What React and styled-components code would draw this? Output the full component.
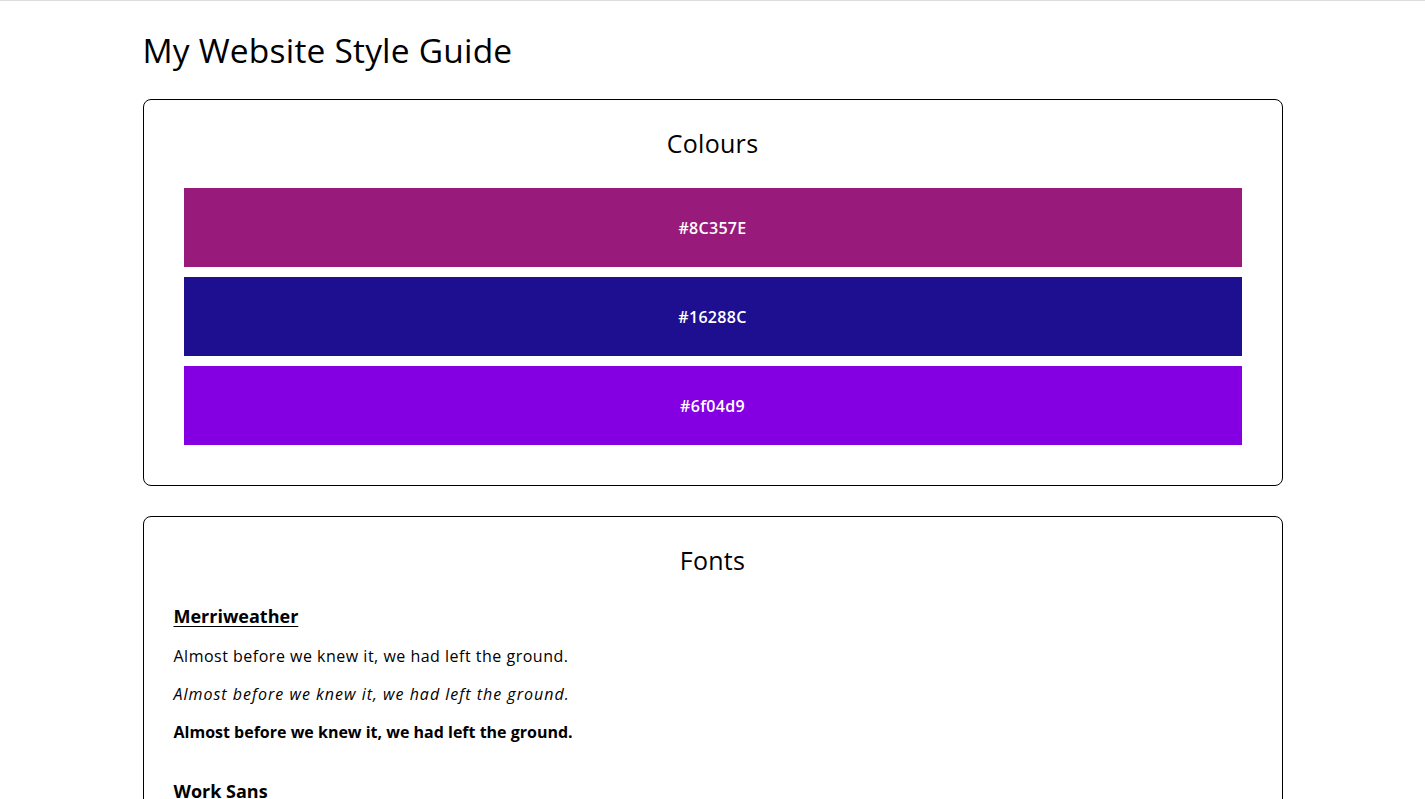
import React from "react";
import styled, { createGlobalStyle } from "styled-components";

const GlobalStyle = createGlobalStyle`
  html, body {
    margin: 0;
    padding: 0;
    overflow: hidden;
  }

  body {
    background: #fff;
    color: #000;
    font-family: "Open Sans", "Liberation Sans", sans-serif;
    border-top: 1px solid #dcdce1;
  }
`;

const colours = [
  { label: "#8C357E", bg: "#981b7b" },
  { label: "#16288C", bg: "#1e0e90" },
  { label: "#6f04d9", bg: "#8400e3" }
];

const fonts = ["Merriweather", "Work Sans"];

const sample = "Almost before we knew it, we had left the ground.";

const Container = styled.main`
  max-width: 1140px;
  margin: 0 auto;
  padding-top: 28px;
`;

const Title = styled.h1`
  margin: 0 0 27px;
  font-size: 33.5px;
  font-weight: 400;
  line-height: 43px;
  letter-spacing: 0.2px;
`;

const Card = styled.section`
  border: 1px solid #000;
  border-radius: 8px;
  padding: 29px ${props => props.$inset}px 40px;
  margin-bottom: 30px;
`;

const CardTitle = styled.h2`
  margin: 0 0 30px;
  text-align: center;
  font-size: 25px;
  font-weight: 400;
  line-height: 29px;
  letter-spacing: 0.3px;
`;

const SwatchList = styled.div`
  display: flex;
  flex-direction: column;
  gap: 10px;
`;

const Swatch = styled.div`
  height: 79px;
  display: flex;
  align-items: center;
  justify-content: center;
  background: ${props => props.$bg};
  color: #fff;
  font-size: 16px;
  font-weight: 600;
  letter-spacing: 0.3px;
`;

const FontBlock = styled.div`
  margin-bottom: 37px;
`;

const FontName = styled.h3`
  margin: 0 0 18px;
  font-size: 18px;
  font-weight: 700;
  line-height: 22px;
  text-decoration: ${props => (props.$underline ? "underline" : "none")};
  text-underline-offset: 3px;
`;

const Sample = styled.p`
  margin: 0 0 16px;
  font-size: 16px;
  line-height: 22px;
  font-style: ${props => (props.$italic ? "italic" : "normal")};
  font-weight: ${props => (props.$bold ? 700 : 400)};
  letter-spacing: ${props => (props.$bold ? 0 : props.$italic ? 1 : 0.5)}px;
`;

export default function App() {
  return (
    <>
      <GlobalStyle />
      <Container>
        <Title>My Website Style Guide</Title>

        <Card $inset={40}>
          <CardTitle>Colours</CardTitle>
          <SwatchList>
            {colours.map(c => (
              <Swatch key={c.label} $bg={c.bg}>
                {c.label}
              </Swatch>
            ))}
          </SwatchList>
        </Card>

        <Card $inset={30}>
          <CardTitle>Fonts</CardTitle>
          {fonts.map((name, i) => (
            <FontBlock key={name}>
              <FontName $underline={i === 0}>{name}</FontName>
              <Sample>{sample}</Sample>
              <Sample $italic>{sample}</Sample>
              <Sample $bold>{sample}</Sample>
            </FontBlock>
          ))}
        </Card>
      </Container>
    </>
  );
}
